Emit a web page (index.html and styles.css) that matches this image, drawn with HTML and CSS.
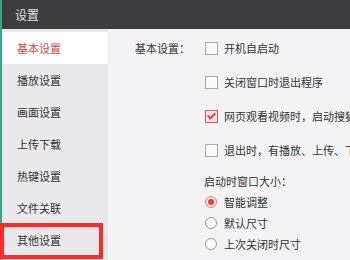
FILE: index.html
```html
<!DOCTYPE html>
<html lang="zh-CN">
<head>
    <meta charset="UTF-8">
    <title>设置</title>
    <link rel="stylesheet" href="styles.css">
</head>
<body>
    <div class="win">
        <div class="header">设置</div>
        <div class="content">
            <div class="side">
                <div class="nav active">基本设置</div>
                <div class="nav">播放设置</div>
                <div class="nav">画面设置</div>
                <div class="nav">上传下载</div>
                <div class="nav">热键设置</div>
                <div class="nav">文件关联</div>
                <div class="nav marked">其他设置</div>
            </div>
            <div class="main">
                <div class="group">
                    <div class="label">基本设置：</div>
                    <div class="opts">
                        <div class="opt"><span class="box"></span>开机自启动</div>
                        <div class="opt"><span class="box"></span>关闭窗口时退出程序</div>
                        <div class="opt"><span class="box on"></span>网页观看视频时，启动搜狐影音播放</div>
                        <div class="opt"><span class="box"></span>退出时，有播放、上传、下载任务时提醒</div>
                        <div class="sub">启动时窗口大小：</div>
                        <div class="radio-row"><span class="radio on"></span>智能调整</div>
                        <div class="radio-row"><span class="radio"></span>默认尺寸</div>
                        <div class="radio-row"><span class="radio"></span>上次关闭时尺寸</div>
                    </div>
                </div>
            </div>
        </div>
    </div>
</body>
</html>
```

FILE: styles.css
```css
body {
    margin: 0;
    width: 350px;
    height: 260px;
    overflow: hidden;
    font-family: "Noto Sans CJK SC", "Noto Sans", sans-serif;
    font-size: 11px;
    color: #333;
}

.win {
    display: flex;
    flex-direction: column;
    height: 260px;
    border-left: 2px solid #3aa58c;
    box-sizing: border-box;
}

.header {
    height: 29px;
    line-height: 29px;
    background-color: #3d3d40;
    color: #e2e2e2;
    font-size: 12px;
    padding-left: 13px;
    flex-shrink: 0;
}

.content {
    display: flex;
    flex: 1;
    min-height: 0;
}

.side {
    width: 106px;
    background-color: #e9e9eb;
    padding-top: 3px;
    flex-shrink: 0;
}

.nav {
    position: relative;
    height: 32px;
    line-height: 32px;
    padding-left: 15px;
}

.active {
    background-color: #fff;
    color: #e8463a;
}

/* red marker round the last item */
.marked::after {
    content: "";
    position: absolute;
    left: -2px;
    top: -1px;
    width: 103px;
    height: 36px;
    border: 4px solid #ff2b2b;
    box-sizing: border-box;
}

.main {
    flex: 1;
    background-color: #f3f3f5;
    padding-top: 2px;
    padding-left: 27px;
    overflow: hidden;
    white-space: nowrap;
}

.group {
    display: flex;
}

.label {
    width: 69px;
    height: 34px;
    line-height: 34px;
    flex-shrink: 0;
}

.opt {
    display: flex;
    align-items: center;
    height: 34px;
}

.box {
    width: 11px;
    height: 11px;
    border: 1px solid #a9a9a9;
    background-color: #fafafa;
    margin-left: 1px;
    margin-right: 6px;
    flex-shrink: 0;
    position: relative;
}

.box.on {
    border-color: #e0585a;
    background-color: #fbe4e4;
}

.box.on::after {
    content: "";
    position: absolute;
    left: 3px;
    top: 0px;
    width: 3px;
    height: 6px;
    border: solid #e0463f;
    border-width: 0 2px 2px 0;
    transform: rotate(45deg);
}

.sub {
    margin-top: 6px;
    padding-bottom: 2px;
    line-height: 16px;
}

.radio-row {
    display: flex;
    align-items: center;
    height: 21px;
}

.radio {
    width: 10px;
    height: 10px;
    border: 1px solid #999;
    border-radius: 50%;
    margin-left: 1px;
    margin-right: 7px;
    box-sizing: content-box;
    background-color: #fafafa;
    position: relative;
}

.radio.on {
    border-color: #ee7c78;
    background-color: #fde8e8;
}

.radio.on::after {
    content: "";
    position: absolute;
    left: 2px;
    top: 2px;
    width: 6px;
    height: 6px;
    border-radius: 50%;
    background-color: #e8403a;
}
```
